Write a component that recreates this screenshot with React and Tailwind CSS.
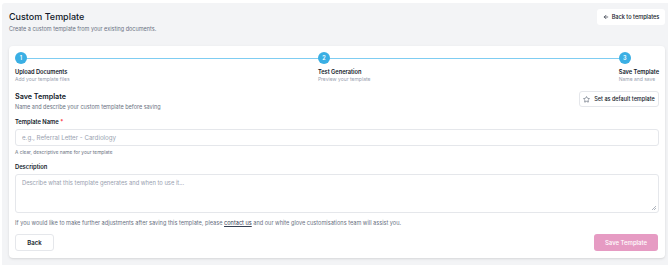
import React from "react";

function Star() {
  return (
    <svg width="7" height="7" viewBox="0 0 24 24" fill="none" stroke="currentColor" strokeWidth="2" strokeLinecap="round" strokeLinejoin="round">
      <path d="M11.525 2.295a.53.53 0 0 1 .95 0l2.31 4.679a2.123 2.123 0 0 0 1.595 1.16l5.166.756a.53.53 0 0 1 .294.904l-3.736 3.638a2.123 2.123 0 0 0-.611 1.878l.882 5.14a.53.53 0 0 1-.771.56l-4.618-2.428a2.122 2.122 0 0 0-1.973 0L6.396 21.01a.53.53 0 0 1-.77-.56l.881-5.139a2.122 2.122 0 0 0-.611-1.879L2.16 9.795a.53.53 0 0 1 .294-.906l5.165-.755a2.122 2.122 0 0 0 1.597-1.16z" />
    </svg>
  );
}

function Arrow() {
  return (
    <svg width="6" height="6" viewBox="0 0 24 24" fill="none" stroke="currentColor" strokeWidth="2.5" strokeLinecap="round" strokeLinejoin="round">
      <path d="m12 19-7-7 7-7" />
      <path d="M19 12H5" />
    </svg>
  );
}

function Step({ n, title, sub }) {
  return (
    <div className="flex flex-col items-start">
      <div className="w-[12px] h-[12px] rounded-full bg-[#3aafe4] text-white text-[5.5px] font-semibold flex items-center justify-center relative z-10">
        {n}
      </div>
      <div className="mt-[4px] text-[5.7px] font-semibold text-gray-900 leading-[8px]">{title}</div>
      <div className="text-[5px] text-gray-400 leading-[7px]">{sub}</div>
    </div>
  );
}

export default function App() {
  return (
    <div className="w-[670px] h-[279px] bg-white pt-[3px] pl-[2px] pr-[2px] pb-[14px]" style={{ fontFamily: "Inter, 'Noto Sans', sans-serif" }}>
      <div className="h-full bg-[#f3f4f6] rounded-tl-[3px] pl-[7px] pr-[3px] pt-[6px]">
        <div className="flex justify-between items-start">
          <div>
            <div className="text-[9px] font-medium text-gray-900 leading-[13px] mt-[1px]">Custom Template</div>
            <div className="text-[5.5px] text-gray-500 leading-[8px] mt-[2px]">Create a custom template from your existing documents.</div>
          </div>
          <button className="h-[16px] w-[68px] bg-white rounded-[3px] flex items-center justify-center gap-[3px] text-[5.6px] font-medium text-gray-900">
            <Arrow />
            Back to templates
          </button>
        </div>

        <div className="mt-[13px] bg-white rounded-[4px] shadow-sm px-[6px] pt-[6px] pb-[7px]">
          <div className="relative flex justify-between items-start">
            <div className="absolute left-[6px] right-[34px] top-[5.5px] h-[1px] bg-[#7fcdf2]" />
            <Step n="1" title="Upload Documents" sub="Add your template files" />
            <Step n="2" title="Test Generation" sub="Preview your template" />
            <Step n="3" title="Save Template" sub="Name and save" />
          </div>

          <div className="mt-[7px] flex justify-between items-start">
            <div>
              <div className="text-[7.2px] font-semibold text-gray-900 leading-[10px] mt-[2px]">Save Template</div>
              <div className="text-[5.5px] text-gray-500 leading-[8px] mt-[1px]">Name and describe your custom template before saving</div>
            </div>
            <button className="mt-[1px] h-[16px] w-[80px] border border-gray-200 rounded-[3px] flex items-center justify-center gap-[4px] text-[5.5px] font-medium text-gray-900">
              <span className="text-gray-600"><Star /></span>
              Set as default template
            </button>
          </div>

          <div className="mt-[7px] text-[5.8px] font-semibold text-gray-900 leading-[8px]">
            Template Name <span className="text-red-500">*</span>
          </div>
          <div className="mt-[3px] h-[17px] border border-gray-200 rounded-[3px] flex items-center px-[6px] text-[6.2px] text-gray-400">
            e.g., Referral Letter - Cardiology
          </div>
          <div className="mt-[3px] text-[4.8px] text-gray-500 leading-[7px]">A clear, descriptive name for your template</div>

          <div className="mt-[7px] text-[5.8px] font-semibold text-gray-900 leading-[8px]">Description</div>
          <div className="mt-[3px] h-[39px] border border-gray-200 rounded-[3px] px-[6px] pt-[4px] text-[5.8px] text-gray-400 relative">
            Describe what this template generates and when to use it...
            <svg className="absolute right-[2px] bottom-[2px]" width="5" height="5" viewBox="0 0 5 5">
              <path d="M5 1 L1 5 M5 3 L3 5" stroke="#9ca3af" strokeWidth="0.8" />
            </svg>
          </div>

          <div className="mt-[6px] text-[5.6px] text-gray-500 leading-[8px]">
            If you would like to make further adjustments after saving this template, please{" "}
            <span className="underline text-gray-700">contact us</span> and our white glove customisations team will assist you.
          </div>

          <div className="mt-[7px] flex justify-between">
            <button className="h-[17px] w-[39px] border border-gray-200 rounded-[3px] text-[6px] font-semibold text-gray-900">Back</button>
            <button className="h-[17px] w-[64px] mr-[1px] bg-[#e69bc3] rounded-[3px] text-[6px] font-medium text-white">Save Template</button>
          </div>
        </div>
      </div>
    </div>
  );
}
